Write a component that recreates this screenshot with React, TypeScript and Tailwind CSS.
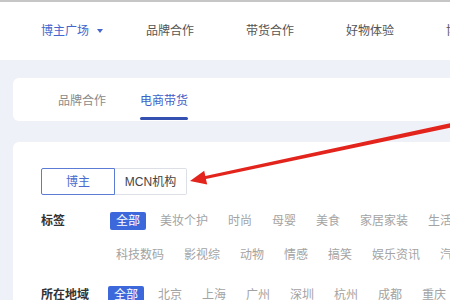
import React from "react";

// Creator square filter page, with a red annotation arrow on top

const NAV = ["品牌合作", "带货合作", "好物体验", "博主学院"];
const TAG_ROWS = [
  ["全部", "美妆个护", "时尚", "母婴", "美食", "家居家装", "生活"],
  ["科技数码", "影视综", "动物", "情感", "搞笑", "娱乐资讯", "汽车"],
];
const REGIONS = ["全部", "北京", "上海", "广州", "深圳", "杭州", "成都", "重庆"];

function Tag({ label, active }: { label: string; active?: boolean }) {
  return (
    <span
      className={`shrink-0 h-[18px] px-[6px] rounded-[2px] text-[12px] leading-[18px] whitespace-nowrap ${
        active ? "bg-[#3d68dc] text-white" : "text-[#a3a3a3]"
      }`}
    >
      {label}
    </span>
  );
}

function Arrow() {
  return (
    <svg className="absolute inset-0 pointer-events-none" width={450} height={300} viewBox="0 0 450 300">
      <polygon
        points="190,181 207.2,184.4 205.9,179.0 452.5,127.1 451.5,122.9 205.3,176.0 204.2,170.8"
        fill="#e3241c"
      />
    </svg>
  );
}

export default function App() {
  return (
    <div
      className="relative w-[450px] h-[300px] overflow-hidden bg-[#eef1f8]"
      style={{ fontFamily: '"Liberation Sans", "Noto Sans CJK SC", sans-serif' }}
    >
      <div className="h-[2px] bg-[#c6c6c6]" />

      {/* Top navigation */}
      <div className="h-[58px] bg-white flex items-center pl-[41px] text-[12px] whitespace-nowrap">
        <div className="w-[105px] shrink-0 flex items-center text-[#4566cc]">
          <span>博主广场</span>
          <svg className="ml-[8px]" width={6} height={4} viewBox="0 0 6 4">
            <polygon points="0,0 6,0 3,4" fill="#4566cc" />
          </svg>
        </div>
        {NAV.map((n) => (
          <div key={n} className="w-[100px] shrink-0 text-[#555]">
            {n}
          </div>
        ))}
      </div>

      <div className="pl-[13px] pt-[18px]">
        {/* Tabs card */}
        <div className="w-[480px] h-[43px] bg-white rounded-l-[6px] flex items-end gap-[34px] pl-[45px] pb-[1px] text-[12px]">
          <div className="flex flex-col">
            <span className="leading-[17px] text-[#8a8a8a]">品牌合作</span>
            <span className="mt-[7px] h-[3px]" />
          </div>
          <div className="flex flex-col">
            <span className="leading-[17px] text-[#3f5fc8]">电商带货</span>
            <span className="mt-[7px] h-[3px] bg-[#3451b2] rounded-[2px]" />
          </div>
        </div>

        {/* Filter card */}
        <div className="w-[480px] h-[200px] mt-[21px] bg-white rounded-tl-[6px] pl-[28px] pt-[26px] text-[12px]">
          <div className="flex h-[27px]">
            <div className="w-[74px] flex items-center justify-center border border-[#5b7bd5] rounded-l-[2px] text-[#4a6bcf]">
              博主
            </div>
            <div className="w-[72px] flex items-center justify-center border border-l-0 border-[#dcdfe6] rounded-r-[2px] text-[#444]">
              MCN机构
            </div>
          </div>

          <div className="mt-[17px] flex">
            <div className="w-[69px] shrink-0 font-semibold text-[#333] leading-[18px]">标签</div>
            <div className="flex flex-col gap-[16px]">
              {TAG_ROWS.map((row, i) => (
                <div key={i} className="flex gap-[8px]">
                  {row.map((t, j) => (
                    <Tag key={t} label={t} active={i === 0 && j === 0} />
                  ))}
                </div>
              ))}
            </div>
          </div>

          <div className="mt-[22px] flex">
            <div className="w-[67px] shrink-0 font-semibold text-[#333] leading-[18px]">所在地域</div>
            <div className="flex gap-[8px]">
              {REGIONS.map((r, j) => (
                <Tag key={r} label={r} active={j === 0} />
              ))}
            </div>
          </div>
        </div>
      </div>

      <Arrow />
    </div>
  );
}
